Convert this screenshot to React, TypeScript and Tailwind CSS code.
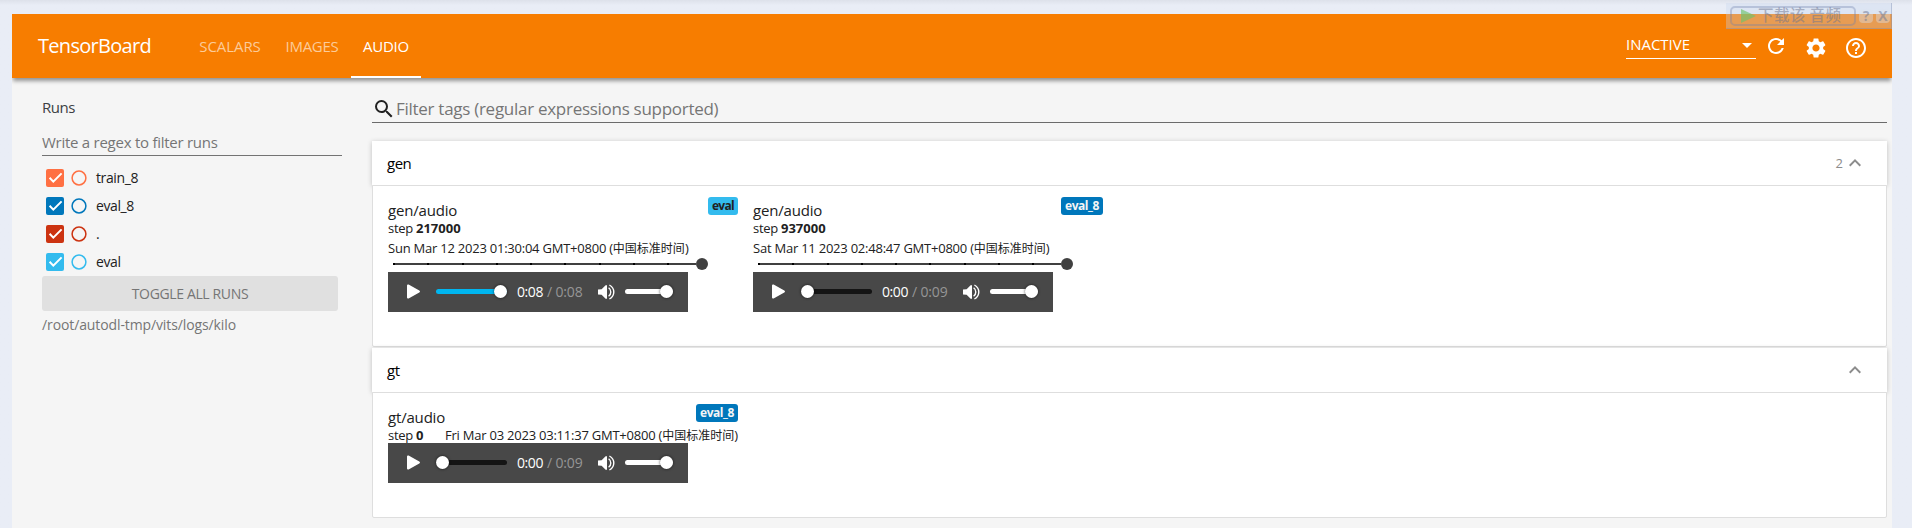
import React from 'react';
import { MdRefresh, MdSettings, MdHelpOutline, MdSearch, MdExpandLess, MdArrowDropDown } from 'react-icons/md';

type Run = { name: string; box: string; ring: string };

const runs: Run[] = [
  { name: 'train_8', box: 'bg-[#ff7043]', ring: 'text-[#ff7043]' },
  { name: 'eval_8', box: 'bg-[#0077bb]', ring: 'text-[#0077bb]' },
  { name: '.', box: 'bg-[#cc3311]', ring: 'text-[#cc3311]' },
  { name: 'eval', box: 'bg-[#33bbee]', ring: 'text-[#33bbee]' },
];

function RunRow({ run }: { run: Run }) {
  return (
    <div className="flex h-7 items-center pl-1">
      <span className={`flex size-[18px] items-center justify-center rounded-[2px] ${run.box}`}>
        <svg width="18" height="18" viewBox="0 0 18 18" fill="none" stroke="#fff" strokeWidth="2">
          <path d="M3.6 8.8 7.3 12.6 15.6 4.4" />
        </svg>
      </span>
      <svg className={`ml-[7px] ${run.ring}`} width="16" height="16" viewBox="0 0 16 16" fill="none" stroke="currentColor" strokeWidth="1.5">
        <circle cx="8" cy="8" r="6.9" />
      </svg>
      <span className="ml-[9px] text-[14px] leading-5 tracking-[-0.39px] text-[#212121]">{run.name}</span>
    </div>
  );
}

function Sidebar() {
  return (
    <aside className="w-[360px] shrink-0 pl-[30px]">
      <div className="mt-[19px] h-5 text-[15px] leading-5 tracking-[-0.45px] text-[#3c4043]">Runs</div>
      <div className="mt-[15px] flex h-6 w-[300px] items-start border-b border-[#737373] text-[15px] leading-[21px] tracking-[-0.26px] text-[#757575]">
        Write a regex to filter runs
      </div>
      <div className="mt-2">
        {runs.map((r) => (
          <RunRow key={r.name} run={r} />
        ))}
      </div>
      <div className="flex h-[35px] w-[296px] items-center justify-center rounded-[3px] bg-[#e0e0e0] text-[14px] tracking-[-0.36px] text-[#757575]">
        TOGGLE ALL RUNS
      </div>
      <div className="mt-1 text-[14px] leading-5 tracking-[-0.11px] text-[#757575]">/root/autodl-tmp/vits/logs/kilo</div>
    </aside>
  );
}

function Thumb({ className }: { className: string }) {
  return (
    <span className={`absolute -top-[4px] size-[13px] rounded-full bg-white shadow-[0_0_3px_rgba(0,0,0,0.7)] ${className}`} />
  );
}

function Player({ now, total, ended }: { now: string; total: string; ended?: boolean }) {
  return (
    <div className="flex h-10 w-[300px] items-center bg-[#484848] pb-px pl-[19px]">
      <svg width="13" height="15" viewBox="0 0 13 15" fill="#fff">
        <path d="M0 1.4C0 .5.8.1 1.6.6L12.3 6.6C13.2 7.1 13.2 7.9 12.3 8.4L1.6 14.4C.8 14.9 0 14.5 0 13.6Z" />
      </svg>
      <div className={`relative ml-4 h-[5px] w-[71px] rounded-full ${ended ? 'bg-[#00b6f0]' : 'bg-[#141414]'}`}>
        <Thumb className={ended ? 'left-[58px]' : 'left-0'} />
      </div>
      <div className="ml-[10px] w-[81px] text-[14px] leading-5 whitespace-nowrap">
        <span className="tracking-[-0.42px] text-white">{now}</span>
        <span className="ml-[4px] tracking-[-0.16px] text-[#969696]">/ {total}</span>
      </div>
      <svg width="17" height="16" viewBox="0 0 17 16" fill="none" stroke="#fff" strokeWidth="1.4">
        <path d="M0 5.6 3.6 5.2 7.6 1.2H9V14.8H7.6L3.6 10.8 0 10.4Z" fill="#fff" stroke="none" />
        <path d="M10.6 3.8Q12.8 5.4 12.8 8T10.6 12.2" />
        <path d="M11.4 1Q15.8 3.4 15.8 8T11.4 15" />
      </svg>
      <div className="relative ml-[10px] h-[5px] w-12 rounded-full bg-white">
        <Thumb className="left-[35px]" />
      </div>
    </div>
  );
}

function StepSlider() {
  return (
    <div className="flex h-4 items-center pl-[5px]">
      <div className="flex h-0.5 w-[303px] justify-between bg-[#404040] pr-[27px]">
        {[0, 1, 2, 3, 4, 5, 6, 7, 8].map((i) => (
          <span key={i} className="h-0.5 w-0.5 bg-black" />
        ))}
      </div>
      <span className="size-3 rounded-full bg-[#404040]" />
    </div>
  );
}

function Stamp({ children }: { children: string }) {
  return (
    <span className="whitespace-nowrap">
      <span className="tracking-[-0.23px]">{children} GMT+0800 (</span>
      <span className="font-['Noto_Sans_CJK_SC',sans-serif] text-[12px]">中国标准时间</span>
      <span>)</span>
    </span>
  );
}

type Clip = { tag: string; run: string; step: string; date: string; now: string; total: string; ended?: boolean; single?: boolean };

function AudioCard({ c }: { c: Clip }) {
  return (
    <div className="w-[350px] text-[13px] leading-4 text-[#212121]">
      <div className="flex h-[23px] items-start justify-between">
        <div className="pt-[3px] text-[15px] leading-5 tracking-[-0.18px]">{c.tag}</div>
        <div
          className={`flex h-[18px] items-center justify-center rounded-[3px] text-[12px] font-bold ${
            c.run === 'eval' ? 'w-[30px] bg-[#33bbee] tracking-[-0.7px] text-[#212121]' : 'w-[42px] bg-[#0077bb] tracking-[-0.44px] text-[#f5f5f5]'
          }`}
        >
          {c.run}
        </div>
      </div>
      <div className="flex h-4 justify-between">
        <span className="whitespace-nowrap">
          <span className="tracking-[-0.3px]">step </span>
          <b className="font-bold">{c.step}</b>
        </span>
        {c.single && <Stamp>{c.date}</Stamp>}
      </div>
      {!c.single && (
        <>
          <div className="mt-1 h-4">
            <Stamp>{c.date}</Stamp>
          </div>
          <StepSlider />
        </>
      )}
      <Player now={c.now} total={c.total} ended={c.ended} />
    </div>
  );
}

function Category({ name, count, clips, body }: { name: string; count?: string; clips: Clip[]; body: string }) {
  return (
    <section>
      <div className="relative flex h-11 items-center justify-between bg-white pr-5 pl-[15px] shadow-[0_1px_5px_rgba(0,0,0,0.22)]">
        <span className="text-[15px] leading-5 tracking-[-0.5px] text-black">{name}</span>
        <span className="flex items-center text-[#8c8c8c]">
          <span className="pt-px text-[13px]">{count}</span>
          <MdExpandLess className="size-6" />
        </span>
      </div>
      <div className={`relative flex gap-[15px] rounded-b-[2px] border border-[#dedede] bg-white pt-[11px] pl-[15px] ${body}`}>
        {clips.map((c) => (
          <AudioCard key={c.run} c={c} />
        ))}
      </div>
    </section>
  );
}

const gen: Clip[] = [
  { tag: 'gen/audio', run: 'eval', step: '217000', date: 'Sun Mar 12 2023 01:30:04', now: '0:08', total: '0:08', ended: true },
  { tag: 'gen/audio', run: 'eval_8', step: '937000', date: 'Sat Mar 11 2023 02:48:47', now: '0:00', total: '0:09' },
];
const gt: Clip[] = [
  { tag: 'gt/audio', run: 'eval_8', step: '0', date: 'Fri Mar 03 2023 03:11:37', now: '0:00', total: '0:09', single: true },
];

function Header() {
  return (
    <header className="relative flex h-16 shrink-0 bg-[#f77d00] pl-[26px] text-[15px] text-white shadow-[0_4px_4px_-1px_rgba(0,0,0,0.4)]">
      <div className="flex w-[149px] items-center text-[20px] tracking-[-0.7px]">TensorBoard</div>
      <nav className="flex flex-1">
        <div className="flex w-[86px] items-center justify-center tracking-[-0.07px] text-[#fccb99]">SCALARS</div>
        <div className="flex w-[78px] items-center justify-center tracking-[-0.27px] text-[#fccb99]">IMAGES</div>
        <div className="flex w-[70px] items-center justify-center border-b-2 border-white pt-[2px] tracking-[-0.23px]">AUDIO</div>
      </nav>
      <div className="mt-[17px] flex h-7 w-[130px] items-center justify-between border-b border-white">
        <span className="pb-[2px] leading-5 tracking-[-0.02px]">INACTIVE</span>
        <MdArrowDropDown className="-mr-[3px] size-6" />
      </div>
      <div className="flex pt-5 pr-6 pl-2">
        <MdRefresh className="size-6" />
        <MdSettings className="mt-[2px] ml-4 size-6" />
        <MdHelpOutline className="mt-[2px] ml-4 size-6" />
      </div>
    </header>
  );
}

function DownloadBar() {
  return (
    <div className="absolute top-[3px] left-[1726px] flex h-[26px] w-[166px] items-center gap-[3px] border-r border-b border-[#7d8cb0]/40 bg-[#c9d7ee]/35 pl-1 text-[#6d7590]/50">
      <div className="flex h-5 w-[126px] items-center rounded-[5px] border-2 border-[#7082ad]/35 pl-[9px]">
        <svg width="15" height="14" viewBox="0 0 15 14">
          <path d="M0 0 15 7 0 14Z" fill="#6fc36a" fillOpacity=".65" />
        </svg>
        <span className="ml-[2px] pb-[3px] font-['Noto_Sans_CJK_SC',sans-serif] text-[15.5px] leading-4 font-medium tracking-[0.4px] whitespace-nowrap">
          下载该 音频
        </span>
      </div>
      <span className="flex size-[14px] items-center justify-center rounded-[4px] bg-[#dde3f0]/40 text-[14px] font-bold">?</span>
      <span className="flex size-[14px] items-center justify-center rounded-[4px] bg-[#dde3f0]/40 text-[14px] font-bold">X</span>
    </div>
  );
}

export default function App() {
  return (
    <div className="relative h-[528px] w-[1912px] overflow-hidden bg-[#e9edf6] bg-linear-to-b from-[#dde1ea] to-[#e9edf6] to-[5px] pt-[14px] pr-5 pl-3 font-['Open_Sans','Noto_Sans_CJK_SC',sans-serif]">
      <div className="flex h-[514px] flex-col overflow-hidden bg-[#f5f5f5]">
        <Header />
        <div className="flex flex-1">
          <Sidebar />
          <main className="w-[1515px]">
            <div className="mt-[19px] flex h-[26px] items-start border-b border-[#6b6b6b]">
              <MdSearch className="size-6 text-[#212121]" />
              <span className="text-[17px] leading-6 tracking-[-0.28px] text-[#757575]">Filter tags (regular expressions supported)</span>
            </div>
            <div className="mt-[18px] flex flex-col gap-px">
              <Category name="gen" count="2" clips={gen} body="h-[162px]" />
              <Category name="gt" clips={gt} body="h-[126px]" />
            </div>
          </main>
        </div>
      </div>
      <DownloadBar />
    </div>
  );
}
